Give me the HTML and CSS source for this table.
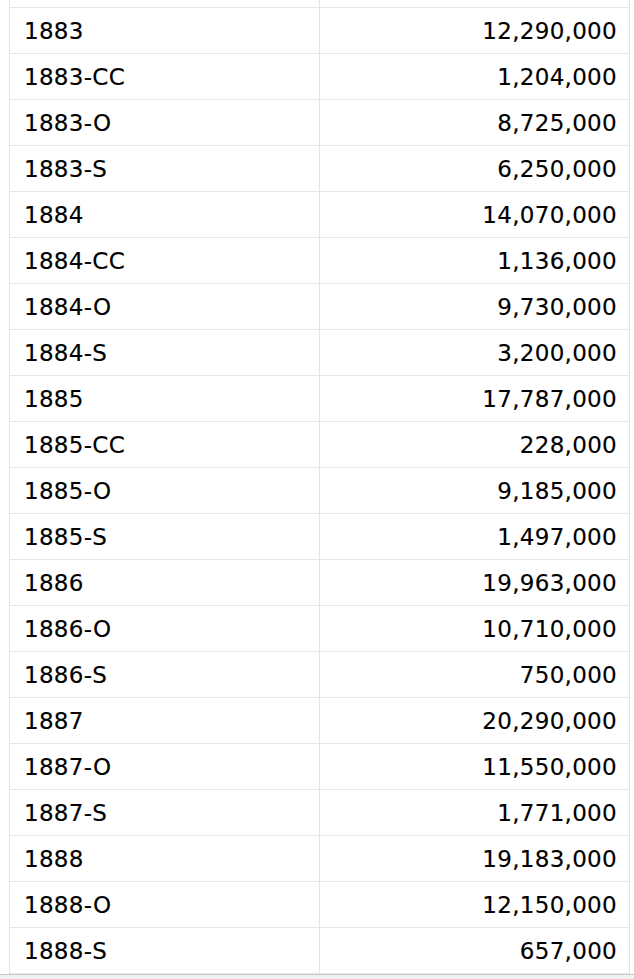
FILE: index.html
```html
<!DOCTYPE html>
<html>
<head>
<meta charset="utf-8">
<link rel="stylesheet" href="styles.css">
</head>
<body>
<div class="sheet">
  <div class="row cut"><div class="cell name"></div><div class="cell num"></div></div>
  <div class="row"><div class="cell name">1883</div><div class="cell num">12,290,000</div></div>
  <div class="row"><div class="cell name">1883-CC</div><div class="cell num">1,204,000</div></div>
  <div class="row"><div class="cell name">1883-O</div><div class="cell num">8,725,000</div></div>
  <div class="row"><div class="cell name">1883-S</div><div class="cell num">6,250,000</div></div>
  <div class="row"><div class="cell name">1884</div><div class="cell num">14,070,000</div></div>
  <div class="row"><div class="cell name">1884-CC</div><div class="cell num">1,136,000</div></div>
  <div class="row"><div class="cell name">1884-O</div><div class="cell num">9,730,000</div></div>
  <div class="row"><div class="cell name">1884-S</div><div class="cell num">3,200,000</div></div>
  <div class="row"><div class="cell name">1885</div><div class="cell num">17,787,000</div></div>
  <div class="row"><div class="cell name">1885-CC</div><div class="cell num">228,000</div></div>
  <div class="row"><div class="cell name">1885-O</div><div class="cell num">9,185,000</div></div>
  <div class="row"><div class="cell name">1885-S</div><div class="cell num">1,497,000</div></div>
  <div class="row"><div class="cell name">1886</div><div class="cell num">19,963,000</div></div>
  <div class="row"><div class="cell name">1886-O</div><div class="cell num">10,710,000</div></div>
  <div class="row"><div class="cell name">1886-S</div><div class="cell num">750,000</div></div>
  <div class="row"><div class="cell name">1887</div><div class="cell num">20,290,000</div></div>
  <div class="row"><div class="cell name">1887-O</div><div class="cell num">11,550,000</div></div>
  <div class="row"><div class="cell name">1887-S</div><div class="cell num">1,771,000</div></div>
  <div class="row"><div class="cell name">1888</div><div class="cell num">19,183,000</div></div>
  <div class="row"><div class="cell name">1888-O</div><div class="cell num">12,150,000</div></div>
  <div class="row"><div class="cell name">1888-S</div><div class="cell num">657,000</div></div>
</div>
<div class="footer"></div>
</body>
</html>
```
FILE: styles.css
```css
html, body {
  margin: 0;
  padding: 0;
  background: #ffffff;
}
body {
  font-family: "DejaVu Sans", Verdana, sans-serif;
  font-size: 23px;
  letter-spacing: 0.3px;
  color: #000000;
  -webkit-text-stroke: 0.15px #000000;
}
.sheet {
  margin-left: 9px;
  width: 621px;
  box-sizing: border-box;
  border-left: 1px solid #e3e3e3;
  border-right: 1px solid #e3e3e3;
}
.row {
  display: grid;
  grid-template-columns: 310px 1fr;
  height: 46px;
  box-sizing: border-box;
  border-bottom: 1px solid #e6e6e6;
}
.row.cut {
  height: 8px;
}
.cell {
  display: flex;
  align-items: center;
  padding: 1px 12px 0 14px;
  box-sizing: border-box;
  white-space: nowrap;
}
.name {
  border-right: 1px solid #e3e3e3;
}
.num {
  justify-content: flex-end;
}
.footer {
  height: 5px;
  border-top: 1px solid #c8c8c8;
  background: #f0f0f0;
  box-sizing: border-box;
}
```
